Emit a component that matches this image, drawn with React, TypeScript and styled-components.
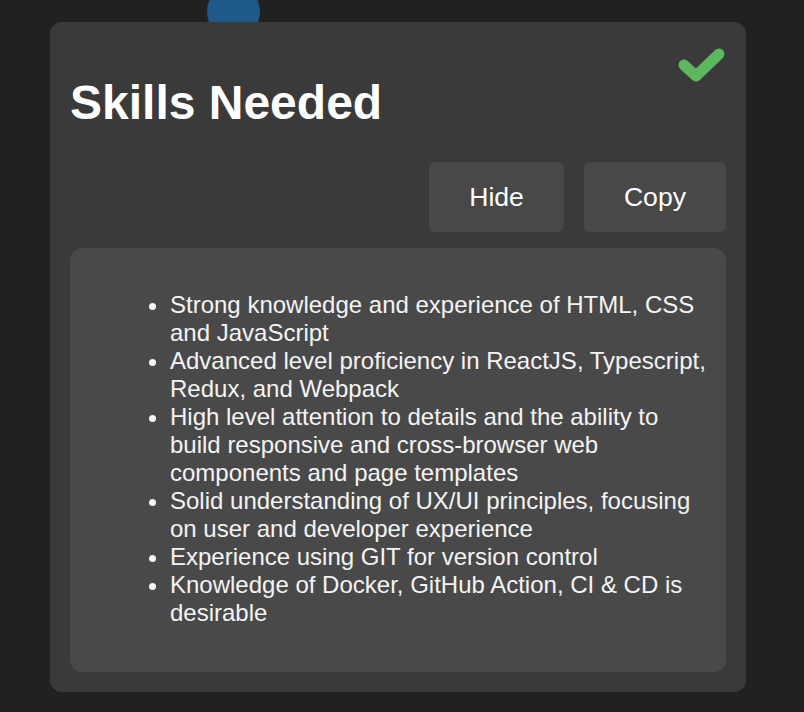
import React from "react";
import styled, { createGlobalStyle } from "styled-components";

const Global = createGlobalStyle`
  html, body { margin: 0; padding: 0; background: #212121; }
  body { font-family: "Liberation Sans", Arial, sans-serif; color: #fff; }
`;

const Page = styled.div`
  position: relative;
  width: 804px;
  height: 712px;
  padding: 22px 0 0 50px;
  box-sizing: border-box;
  overflow: hidden;
`;

const Orb = styled.div`
  position: absolute;
  left: 207px;
  top: -15px;
  width: 53px;
  height: 53px;
  border-radius: 50%;
  background: #1f5a8b;
  z-index: 0;
`;

const Card = styled.section`
  position: relative;
  z-index: 1;
  width: 696px;
  box-sizing: border-box;
  padding: 0 20px 20px;
  background: #3a3a3a;
  border-radius: 12px;
  display: flow-root;
`;

const Check = styled.svg`
  position: absolute;
  top: 24px;
  right: 18px;
  width: 52px;
  height: 42px;
  filter: blur(0.6px);
`;

const Title = styled.h1`
  margin: 53px 0 32px;
  font-size: 48px;
  font-weight: 700;
  line-height: normal;
  color: #fff;
`;

const Actions = styled.div`
  display: flex;
  justify-content: flex-end;
  gap: 20px;
  margin-bottom: 16px;
`;

const Button = styled.button`
  height: 70px;
  padding: 0 40px;
  border: none;
  border-radius: 6px;
  background: #484848;
  color: #fff;
  font-family: "Liberation Sans", Arial, sans-serif;
  font-size: 26.6px;
  cursor: pointer;
`;

const Box = styled.div`
  background: #494949;
  border-radius: 12px;
  padding: 20px;
  display: flow-root;
`;

const List = styled.ul`
  margin: 23px 0 25px;
  padding-left: 80px;
  font-size: 24px;
  line-height: 28px;
  color: #f4f4f4;
`;

const skills = [
  "Strong knowledge and experience of HTML, CSS and JavaScript",
  "Advanced level proficiency in ReactJS, Typescript, Redux, and Webpack",
  "High level attention to details and the ability to build responsive and cross-browser web components and page templates",
  "Solid understanding of UX/UI principles, focusing on user and developer experience",
  "Experience using GIT for version control",
  "Knowledge of Docker, GitHub Action, CI & CD is desirable",
];

export default function App() {
  return (
    <>
      <Global />
      <Page>
        <Orb />
        <Card>
          <Check viewBox="0 0 52 42">
            <polyline
              points="8,19 20,30 43,8"
              fill="none"
              stroke="#5cb85c"
              strokeWidth="11"
              strokeLinecap="round"
              strokeLinejoin="round"
            />
          </Check>
          <Title>Skills Needed</Title>
          <Actions>
            <Button>Hide</Button>
            <Button>Copy</Button>
          </Actions>
          <Box>
            <List>
              {skills.map((s) => (
                <li key={s}>{s}</li>
              ))}
            </List>
          </Box>
        </Card>
      </Page>
    </>
  );
}
